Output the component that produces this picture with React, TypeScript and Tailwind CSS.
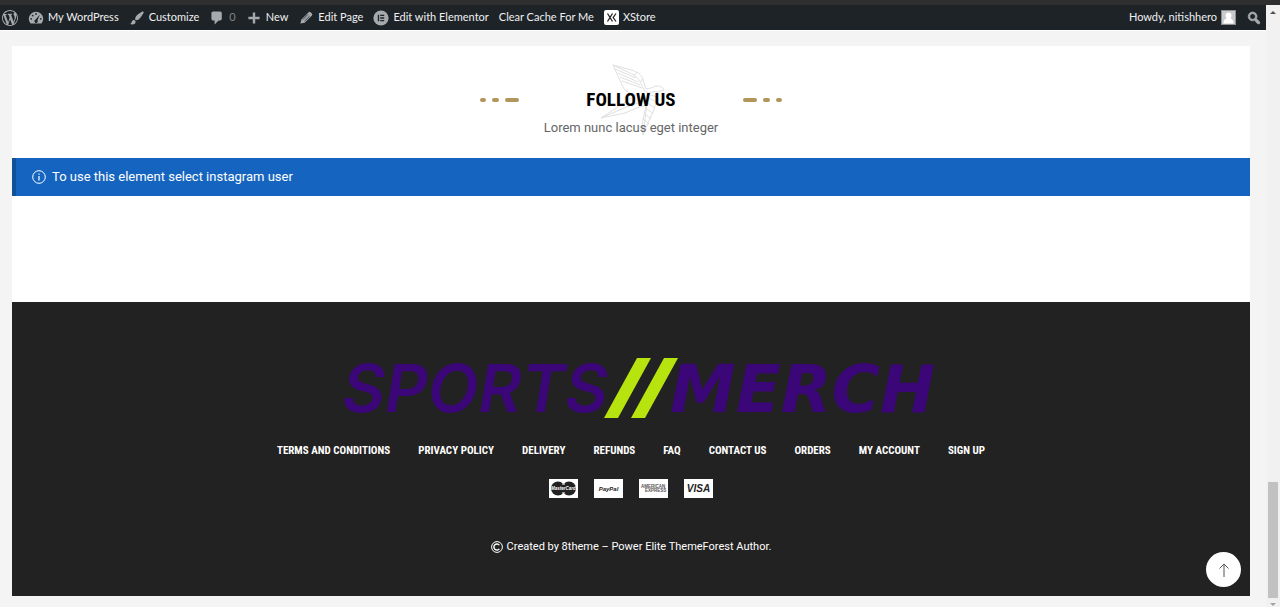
import type { ReactNode } from "react";

const footerLinks = [
  "Terms and conditions",
  "Privacy policy",
  "Delivery",
  "Refunds",
  "FAQ",
  "Contact us",
  "Orders",
  "My account",
  "Sign up",
];

function BarIcon({ children }: { children: ReactNode }) {
  return (
    <svg viewBox="0 0 20 20" className="size-4 shrink-0 fill-[#a7aaad]" aria-hidden="true">
      {children}
    </svg>
  );
}

function BarLink({ icon, children }: { icon?: ReactNode; children: ReactNode }) {
  return (
    <a href="#" className="flex items-center gap-1 whitespace-nowrap hover:text-[#72aee6]">
      {icon}
      <span>{children}</span>
    </a>
  );
}

function AdminBar() {
  return (
    <header className="flex h-[26px] items-center justify-between border-b border-white bg-[#1d2327] pr-1 pl-0.5 font-[Lato,'Noto_Sans',sans-serif] text-[11px] text-[#f0f0f1]">
      <nav className="flex items-center gap-2.5" aria-label="Toolbar">
        <a href="#" aria-label="About WordPress">
          <BarIcon>
            <path d="M20 10c0-5.51-4.49-10-10-10C4.48 0 0 4.49 0 10c0 5.52 4.48 10 10 10 5.51 0 10-4.48 10-10zM7.78 15.37L4.37 6.22c.55-.02 1.17-.08 1.17-.08.5-.06.44-1.13-.06-1.11 0 0-1.45.11-2.37.11-.18 0-.37 0-.58-.01C4.12 2.69 6.87 1.11 10 1.11c2.33 0 4.45.87 6.05 2.34-.68-.11-1.65.39-1.65 1.58 0 .74.45 1.36.9 2.1.35.61.55 1.36.55 2.46 0 1.49-1.4 5-1.4 5l-3.03-8.37c.54-.02.82-.17.82-.17.5-.05.44-1.25-.06-1.22 0 0-1.44.12-2.38.12-.87 0-2.33-.12-2.33-.12-.5-.03-.56 1.2-.06 1.22l.92.08 1.26 3.41zM17.41 10c.24-.64.74-1.87.43-4.25.7 1.29 1.05 2.71 1.05 4.25 0 3.29-1.73 6.24-4.4 7.78.97-2.59 1.94-5.2 2.92-7.78zM6.1 18.09C3.12 16.65 1.11 13.53 1.11 10c0-1.3.23-2.48.72-3.59C3.25 10.3 4.67 14.2 6.1 18.09zm4.03-6.63l2.58 6.98c-.86.29-1.76.45-2.71.45-.79 0-1.57-.11-2.29-.33.81-2.38 1.62-4.74 2.42-7.1z" />
          </BarIcon>
        </a>
        <BarLink
          icon={
            <BarIcon>
              <path d="M3.2 17h13.6A9 9 0 1 0 3.2 17z" />
              <g fill="#1d2327">
                <circle cx="10" cy="5" r="1.1" />
                <circle cx="5.8" cy="7" r="1.1" />
                <circle cx="4" cy="11" r="1.1" />
                <circle cx="16" cy="11" r="1.1" />
                <path d="M14.9 5.6l-3 7.2a2.1 2.1 0 1 1-2.3-.9z" />
              </g>
            </BarIcon>
          }
        >
          My WordPress
        </BarLink>
        <BarLink
          icon={
            <BarIcon>
              <path d="M18.33 3.57s.27-.8-.31-1.36c-.53-.52-1.22-.24-1.22-.24-.61.3-5.76 3.47-7.67 5.57-.86.96-2.06 3.79-1.09 4.82.92.98 3.96-.17 4.79-1 2.06-2.06 5.21-7.17 5.5-7.79zM1.4 17.65c2.37-1.56 1.46-3.41 3.23-4.64.93-.65 2.22-.62 3.08.29.63.67.8 2.57-.16 3.46-1.57 1.45-4 1.55-6.15.89z" />
            </BarIcon>
          }
        >
          Customize
        </BarLink>
        <BarLink
          icon={
            <BarIcon>
              <path d="M5 2h9c1.1 0 2 .9 2 2v7c0 1.1-.9 2-2 2h-2l-5 5v-5H5c-1.1 0-2-.9-2-2V4c0-1.1.9-2 2-2z" />
            </BarIcon>
          }
        >
          <span className="text-[#80858a]">0</span>
        </BarLink>
        <BarLink
          icon={
            <BarIcon>
              <path d="M17 8.5v3h-5.500v5.500h-3v-5.500H3v-3h5.500V3h3v5.500z" />
            </BarIcon>
          }
        >
          New
        </BarLink>
        <BarLink
          icon={
            <BarIcon>
              <path d="M3 17l1.200-5.200L13 3c1-1 2-.8 2.700-.1l1.600 1.600c.7.700.8 1.700-.1 2.600L8.400 15.800z" />
              <path d="M6 12l6.500-6.500M8.200 14l6.300-6.300" fill="none" stroke="#1d2327" />
            </BarIcon>
          }
        >
          Edit Page
        </BarLink>
        <BarLink
          icon={
            <BarIcon>
              <circle cx="10" cy="10" r="9.500" />
              <path fill="#1d2327" d="M6 6h1.700v8H6zM9 6h5v1.600H9zM9 9.200h5v1.600H9zM9 12.400h5V14H9z" />
            </BarIcon>
          }
        >
          Edit with Elementor
        </BarLink>
        <BarLink>Clear Cache For Me</BarLink>
        <BarLink
          icon={
            <svg viewBox="0 0 15 15" className="size-[15px]" aria-hidden="true">
              <rect width="15" height="15" rx="2" fill="#fff" />
              <path d="M3.500 3.500l5 8M8.500 3.500l-5 8M12 3.500L9.200 7.500l2.800 4" fill="none" stroke="#222" strokeWidth="1.300" />
            </svg>
          }
        >
          XStore
        </BarLink>
      </nav>
      <div className="flex items-center gap-2.5">
        <a href="#" className="flex items-center gap-1 whitespace-nowrap">
          Howdy, nitishhero
          <svg viewBox="0 0 15 15" className="size-[15px]" aria-hidden="true">
            <rect width="15" height="15" fill="#c9c9c9" />
            <path d="M7.500 2.500a3 3 0 0 1 2 5.300c.2 1.400 3 1.200 3 5.700h-10c0-4.500 2.800-4.300 3-5.700a3 3 0 0 1 2-5.300z" fill="#fff" />
            <rect x=".5" y=".5" width="14" height="14" fill="none" stroke="#8c8f94" />
          </svg>
        </a>
        <button type="button" aria-label="Search">
          <BarIcon>
            <path
              stroke="#a7aaad"
              d="M12.14 4.18c1.87 1.87 2.11 4.75.72 6.89.12.1.22.21.36.31.2.16.47.36.81.59.34.24.56.39.66.47.42.31.73.57.94.78.32.32.6.65.84 1 .25.35.44.69.59 1.04.14.35.21.68.18 1-.02.32-.14.59-.36.81s-.49.34-.81.36c-.31.02-.65-.04-.99-.19-.35-.14-.7-.34-1.04-.59-.35-.24-.68-.52-1-.84-.21-.21-.47-.52-.77-.93-.1-.13-.25-.35-.47-.66-.22-.32-.4-.57-.56-.78-.16-.2-.29-.35-.44-.5-2.07 1.09-4.69.76-6.44-.98-2.14-2.15-2.14-5.64 0-7.78 2.15-2.15 5.63-2.15 7.78 0zm-1.41 6.36c1.36-1.37 1.36-3.58 0-4.95-1.37-1.37-3.59-1.37-4.95 0-1.37 1.37-1.37 3.58 0 4.95 1.36 1.37 3.58 1.37 4.95 0z"
            />
          </BarIcon>
        </button>
      </div>
    </header>
  );
}

function Dashes({ flip = false }: { flip?: boolean }) {
  return (
    <span className={flip ? "flex flex-row-reverse gap-1.5" : "flex gap-1.5"} aria-hidden="true">
      <span className="h-1 w-1.5 rounded-full bg-[#b1965c]" />
      <span className="h-1 w-[7px] rounded-full bg-[#b1965c]" />
      <span className="h-1 w-3.5 rounded-full bg-[#b1965c]" />
    </span>
  );
}

// Line drawing of a swallow that sits behind the section title
function Swallow() {
  return (
    <svg
      viewBox="0 0 66 74"
      className="absolute -top-[22px] left-1/2 h-[74px] w-[66px] -translate-x-[31px] fill-none stroke-[#e0e0e0]"
      aria-hidden="true"
    >
      <path d="M13 1l18 5c7 2 11 5 12 10l3 9c5 0 7-3 12-3 4 0 5 2 6 4l-7 2c-1 9-2 18-6 24L43 71c-1-8-1-14 1-20 1-6 3-8 3-10-8 1-14 5-22 8L1 54l20-13c6-4 10-7 15-10-4-2-10-2-13-8z" />
      <path d="M13 1l21 10c5 3 7 9 10 15M15 5l21 9M18 9l20 9M20 13l20 8M22 17l20 7M34 11l4-3M40 19l3-5M44 26l4 3 9-2M48 30l9 3M47 33l9 5M46 38l9 6M45 43l8 7M44 49l7 6M43 55l6 5M43 62l3 4M48 30l-2 17-3 24M1 54l23-10 22-8" />
    </svg>
  );
}

function Heading() {
  return (
    <div className="flex h-28 flex-col items-center pt-10">
      <div className="relative flex w-[303px] items-center justify-between">
        <Swallow />
        <Dashes />
        <h2 className="relative font-['Roboto_Condensed','Liberation_Sans_Narrow',Roboto,sans-serif] text-[19px] leading-7 font-bold text-black uppercase">
          Follow us
        </h2>
        <Dashes flip />
      </div>
      <p className="relative mt-1 text-[13px] leading-5 text-[#666]">Lorem nunc lacus eget integer</p>
    </div>
  );
}

function Logo() {
  return (
    <svg
      viewBox="-3 -16 620 94"
      className="mx-auto h-[94px] w-full max-w-[620px] fill-[#3b0678] italic"
      role="img"
      aria-label="Sports//Merch"
    >
      <text x="284" y="55" textAnchor="end" className="font-[Inter,sans-serif] text-[66px] font-semibold">
        SPORTS
      </text>
      <text x="346" y="55" className="font-['DejaVu_Sans',sans-serif] text-[66px] font-bold">
        MERCH
      </text>
      <path d="M313 1h14l-33 60h-14zM340 1h14l-33 60h-14z" fill="#b7e30f" />
    </svg>
  );
}

function Card({ name, children }: { name: string; children: ReactNode }) {
  return (
    <svg viewBox="0 0 29 19" className="h-[19px] w-[29px] bg-white font-['Liberation_Sans',sans-serif]" role="img" aria-label={name}>
      {children}
    </svg>
  );
}

function Footer() {
  return (
    <footer className="flex flex-col items-center bg-[#222] px-4 pt-[39px] pb-[41px] text-white">
      <Logo />
      <nav
        aria-label="Footer"
        className="mt-2 flex flex-wrap justify-center gap-x-7 font-['Roboto_Condensed','Liberation_Sans_Narrow',Roboto,sans-serif] text-[11px] leading-4 font-bold uppercase"
      >
        {footerLinks.map((link) => (
          <a key={link} href="#" className="hover:opacity-70">
            {link}
          </a>
        ))}
      </nav>
      <div className="mt-5 flex gap-4">
        <Card name="MasterCard">
          <circle cx="9" cy="9.500" r="7" fill="#222" />
          <circle cx="20" cy="9.500" r="7" fill="#222" />
          <path d="M13 5h3M13 14h3" stroke="#fff" />
          <text x="14.500" y="11" textAnchor="middle" fontSize="4.500" fontWeight="bold" fontStyle="italic" fill="#fff">
            MasterCard
          </text>
        </Card>
        <Card name="PayPal">
          <text x="14.500" y="11.500" textAnchor="middle" fontSize="6" fontWeight="bold" fontStyle="italic" fill="#222">
            PayPal
          </text>
        </Card>
        <Card name="American Express">
          <g fontSize="4.500" fontWeight="bold" fill="#555">
            <text x="2" y="9">AMERICAN</text>
            <text x="6" y="13">EXPRESS</text>
          </g>
        </Card>
        <Card name="Visa">
          <text x="14.500" y="13" textAnchor="middle" fontSize="10" fontWeight="bold" fontStyle="italic" fill="#222">
            VISA
          </text>
        </Card>
      </div>
      <p className="mt-[41px] flex items-center gap-1 text-[11px] leading-4">
        <svg viewBox="0 0 12 12" className="size-3 fill-none stroke-white" aria-hidden="true">
          <circle cx="6" cy="6" r="5.400" />
          <path d="M8.300 4.200a3 3 0 1 0 0 3.600" strokeWidth="1.400" />
        </svg>
        Created by 8theme – Power Elite ThemeForest Author.
      </p>
    </footer>
  );
}

function Scrollbar() {
  return (
    <div className="flex w-3.5 shrink-0 flex-col items-center bg-[#f1f1f1]" aria-hidden="true">
      <svg viewBox="0 0 14 14" className="size-3.5 fill-[#505050]">
        <path d="M4 9l3-3 3 3z" />
      </svg>
      <div className="flex w-2.5 grow flex-col justify-end">
        <div className="h-1/5 bg-[#c1c1c1]" />
      </div>
      <svg viewBox="0 0 14 9" className="h-[9px] w-3.5 fill-[#a3a3a3]">
        <path d="M4 5l3 3 3-3z" />
      </svg>
    </div>
  );
}

export default function App() {
  return (
    <div className="flex min-h-screen flex-col bg-[#f4f4f4] font-[Roboto,sans-serif]">
      <div className="h-[5px] bg-[#2f2f2f]" />
      <div className="flex grow">
        <div className="flex min-w-0 grow flex-col">
          <AdminBar />
          <main className="mt-[15px] mr-4 mb-[11px] ml-3 flex grow flex-col bg-white">
            <Heading />
            <div
              role="status"
              className="flex h-[38px] items-center gap-1.5 border-l-4 border-[#11519a] bg-[#1565c0] pl-4 text-[13px] text-white"
            >
              <svg viewBox="0 0 14 14" className="size-3.5 fill-none stroke-white" aria-hidden="true">
                <circle cx="7" cy="7" r="6.300" />
                <path d="M7 6v4.500M7 3.500v1.300" strokeWidth="1.200" />
              </svg>
              To use this element select instagram user
            </div>
            <div className="min-h-[106px] grow" />
            <Footer />
          </main>
        </div>
        <Scrollbar />
      </div>
      <button
        type="button"
        aria-label="Back to top"
        className="fixed right-[39px] bottom-5 flex size-[35px] items-center justify-center rounded-full bg-white"
      >
        <svg viewBox="0 0 14 14" className="size-3.5 fill-none stroke-[#555]" aria-hidden="true">
          <path d="M7 14V1M2.500 5.500L7 1l4.500 4.500" />
        </svg>
      </button>
    </div>
  );
}
